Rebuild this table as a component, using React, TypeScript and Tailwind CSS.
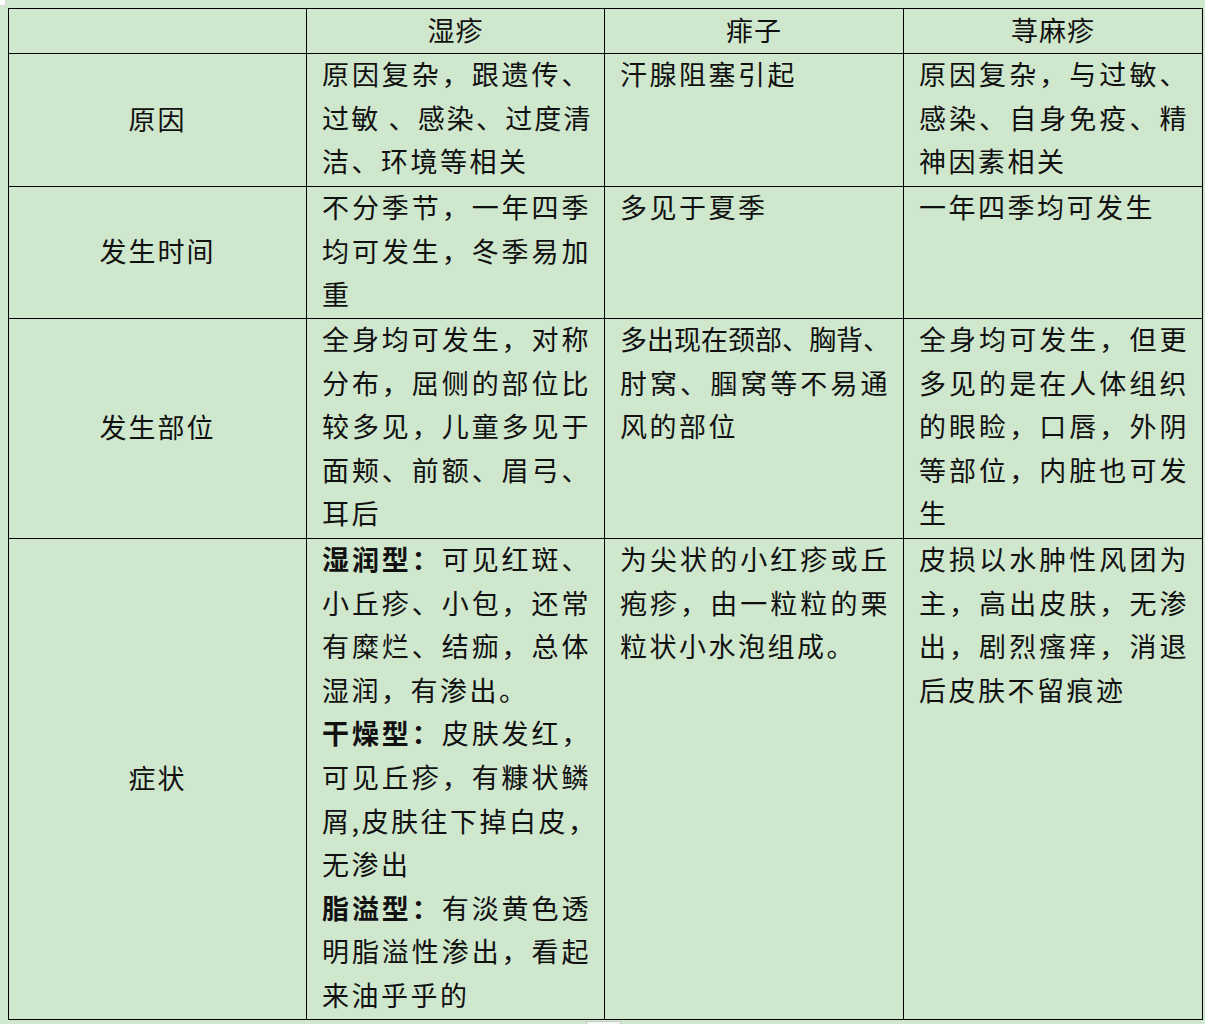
import React from 'react';

type Line = { text: string; bold?: string; full?: boolean; tight?: boolean; snug?: boolean };

const rows: { label: string; height: string; cells: Line[][] }[] = [
  {
    label: '原因',
    height: 'h-[133px]',
    cells: [
      [
        { text: '原因复杂，跟遗传、', full: true },
        { text: '过敏 、感染、过度清', full: true, snug: true },
        { text: '洁、环境等相关' },
      ],
      [{ text: '汗腺阻塞引起' }],
      [
        { text: '原因复杂，与过敏、', full: true },
        { text: '感染、自身免疫、精', full: true },
        { text: '神因素相关' },
      ],
    ],
  },
  {
    label: '发生时间',
    height: 'h-[132px]',
    cells: [
      [
        { text: '不分季节，一年四季', full: true },
        { text: '均可发生，冬季易加', full: true },
        { text: '重' },
      ],
      [{ text: '多见于夏季' }],
      [{ text: '一年四季均可发生' }],
    ],
  },
  {
    label: '发生部位',
    height: 'h-[220px]',
    cells: [
      [
        { text: '全身均可发生，对称', full: true },
        { text: '分布，屈侧的部位比', full: true },
        { text: '较多见，儿童多见于', full: true },
        { text: '面颊、前额、眉弓、', full: true },
        { text: '耳后' },
      ],
      [
        { text: '多出现在颈部、胸背、', full: true, tight: true },
        { text: '肘窝、腘窝等不易通', full: true },
        { text: '风的部位' },
      ],
      [
        { text: '全身均可发生，但更', full: true },
        { text: '多见的是在人体组织', full: true },
        { text: '的眼睑，口唇，外阴', full: true },
        { text: '等部位，内脏也可发', full: true },
        { text: '生' },
      ],
    ],
  },
  {
    label: '症状',
    height: 'h-[481px]',
    cells: [
      [
        { bold: '湿润型：', text: '可见红斑、', full: true },
        { text: '小丘疹、小包，还常', full: true },
        { text: '有糜烂、结痂，总体', full: true },
        { text: '湿润，有渗出。' },
        { bold: '干燥型：', text: '皮肤发红，', full: true },
        { text: '可见丘疹，有糠状鳞', full: true },
        { text: '屑,皮肤往下掉白皮，', full: true },
        { text: '无渗出' },
        { bold: '脂溢型：', text: '有淡黄色透', full: true },
        { text: '明脂溢性渗出，看起', full: true },
        { text: '来油乎乎的' },
      ],
      [
        { text: '为尖状的小红疹或丘', full: true },
        { text: '疱疹，由一粒粒的栗', full: true },
        { text: '粒状小水泡组成。' },
      ],
      [
        { text: '皮损以水肿性风团为', full: true },
        { text: '主，高出皮肤，无渗', full: true },
        { text: '出，剧烈瘙痒，消退', full: true },
        { text: '后皮肤不留痕迹' },
      ],
    ],
  },
];

function CellText({ lines }: { lines: Line[] }) {
  return (
    <div className="-mt-[2px] pl-[15px] pr-[13px]">
      {lines.map((l, i) => (
        <div
          key={i}
          className={`whitespace-nowrap ${
            l.tight ? 'tracking-[-0.1px]' : l.snug ? 'tracking-[0.5px]' : 'tracking-[2.5px]'
          } ${l.full ? 'text-justify [text-align-last:justify]' : 'text-left'}`}
        >
          {l.bold && <span className="font-bold">{l.bold}</span>}
          {l.text}
        </div>
      ))}
    </div>
  );
}

export default function App() {
  return (
    <div
      className="relative min-h-[1024px] w-full bg-[#cfe7cd] pt-2 pl-2 text-[27px] leading-[43.6px] text-[#111]"
      style={{ fontFamily: '"Noto Sans CJK SC", "Noto Sans", sans-serif' }}
    >
      <div className="absolute left-0 top-0 h-[6px] w-[6px] border-r border-b border-[#d8d8d8] bg-white" />

      <div className="grid w-[1195px] grid-cols-[298px_298px_299px_299px] border-l border-t border-black">
        {/* header */}
        <div className="h-[45px] border-r border-b border-black" />
        {['湿疹', '痱子', '荨麻疹'].map((h) => (
          <div
            key={h}
            className="flex h-[45px] items-center justify-center border-r border-b border-black pb-[3px] tracking-[1px]"
          >
            {h}
          </div>
        ))}

        {rows.map((row) => (
          <React.Fragment key={row.label}>
            <div
              className={`${row.height} flex items-center justify-center border-r border-b border-black pb-[3px] tracking-[2px]`}
            >
              {row.label}
            </div>
            {row.cells.map((lines, ci) => (
              <div key={ci} className={`${row.height} border-r border-b border-black`}>
                <CellText lines={lines} />
              </div>
            ))}
          </React.Fragment>
        ))}
      </div>

      <div className="absolute left-[586px] top-[1021px] h-[3px] w-[35px] border-l border-t border-r border-[#c9c9c9] bg-[#f4f8f3]" />
    </div>
  );
}
